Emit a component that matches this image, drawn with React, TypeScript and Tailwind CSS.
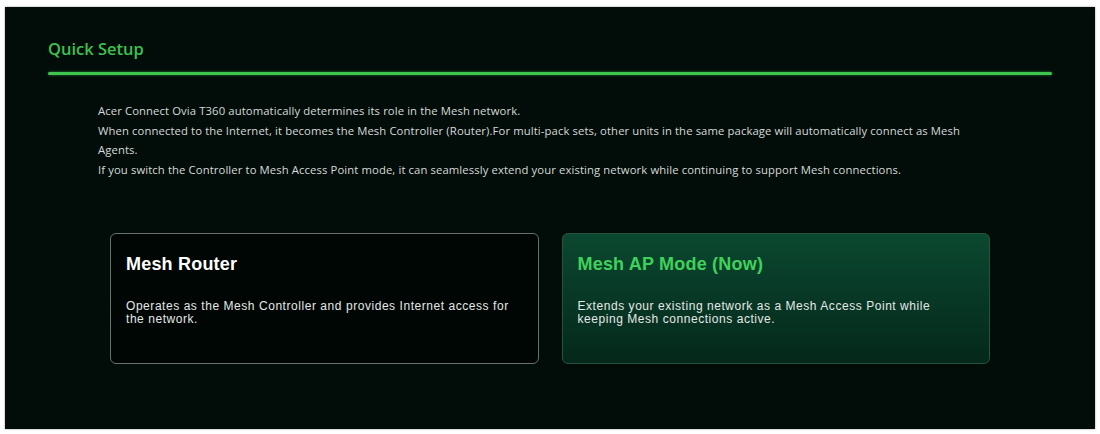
import React from "react";

interface ModeCard {
  title: string;
  desc: string;
  active: boolean;
}

const modes: ModeCard[] = [
  {
    title: "Mesh Router",
    desc: "Operates as the Mesh Controller and provides Internet access for the network.",
    active: false,
  },
  {
    title: "Mesh AP Mode (Now)",
    desc: "Extends your existing network as a Mesh Access Point while keeping Mesh connections active.",
    active: true,
  },
];

const App = () => {
  return (
    <div className="h-[434px] w-[1100px] bg-white pt-[7px] px-[5px] overflow-hidden">
      <div className="h-[422px] bg-[#020c09] px-[43px] pt-[32px] shadow-[0_0_2px_rgba(0,0,0,0.4)]">
        {/* Header */}
        <h2
          className="text-[16.5px] leading-[20px] font-semibold text-[#3cc250]"
          style={{ fontFamily: '"Open Sans", sans-serif' }}
        >
          Quick Setup
        </h2>
        <div className="mt-[13px] h-[3px] rounded-full bg-[#3fc44f] shadow-[0_0_3px_rgba(60,200,80,0.6)]" />

        {/* Intro text */}
        <div
          className="mt-[26px] ml-[50px] mr-[30px] text-[11.3px] tracking-[0.1px] leading-[19.5px] text-[#d5dad7]"
          style={{ fontFamily: '"Open Sans", sans-serif' }}
        >
          <p>Acer Connect Ovia T360 automatically determines its role in the Mesh network.</p>
          <p>
            When connected to the Internet, it becomes the Mesh Controller (Router).For multi-pack sets, other units in the same package will automatically connect as Mesh
            <br />
            Agents.
          </p>
          <p>
            If you switch the Controller to Mesh Access Point mode, it can seamlessly extend your existing network while continuing to support Mesh connections.
          </p>
        </div>

        {/* Mode cards */}
        <div
          className="mt-[54px] mx-[62px] grid grid-cols-2 gap-[23px]"
          style={{ fontFamily: '"Liberation Sans", Arial, sans-serif' }}
        >
          {modes.map((m) => (
            <div
              key={m.title}
              className={`h-[131px] rounded-[6px] border pl-[15px] pr-[24px] pt-[20px] ${
                m.active
                  ? "border-[#24533f] bg-gradient-to-b from-[#0b4830] to-[#05281b]"
                  : "border-[#66716c] bg-[#000604]"
              }`}
            >
              <h3
                className={`text-[18px] leading-[20px] font-bold tracking-[0.2px] ${
                  m.active ? "text-[#3fd25b]" : "text-white"
                }`}
              >
                {m.title}
              </h3>
              <p className="mt-[26px] text-[12px] tracking-[0.55px] leading-[13px] text-[#e4e8e6]">
                {m.desc}
              </p>
            </div>
          ))}
        </div>
      </div>
    </div>
  );
};

export default App;
